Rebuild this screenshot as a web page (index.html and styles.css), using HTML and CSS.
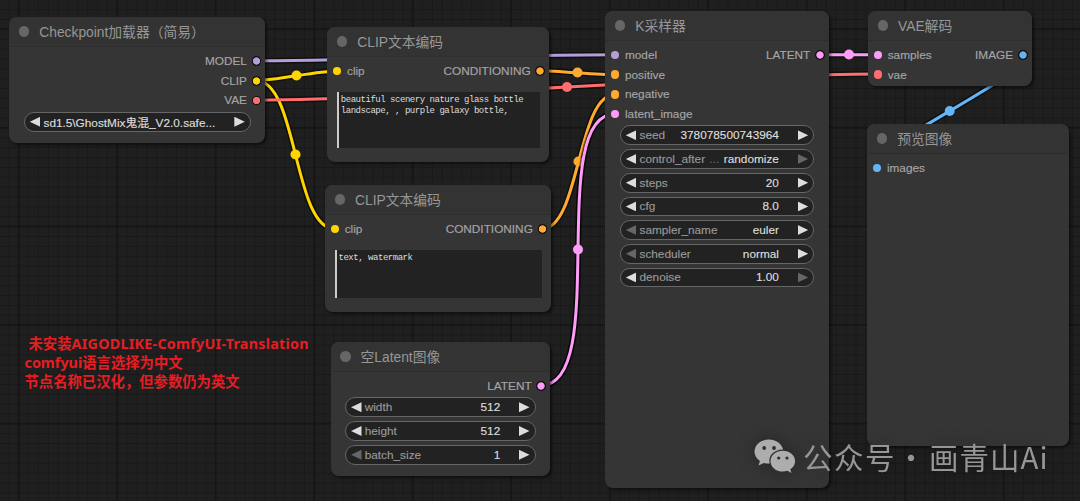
FILE: index.html
```html
<!DOCTYPE html>
<html lang="zh-CN">
<head>
<meta charset="utf-8">
<title>ComfyUI</title>
<link rel="stylesheet" href="styles.css">
</head>
<body>
<main class="canvas">
  <svg class="links" width="1080" height="501" viewBox="0 0 1080 501">
    <defs>
      <pattern id="minor" x="18.3" y="28.9" width="9.85" height="9.86" patternUnits="userSpaceOnUse">
        <path d="M0 .5H9.85M.5 0V9.86" stroke="#191919" stroke-width="1"/>
      </pattern>
      <pattern id="major" x="17.8" y="28.3" width="98.5" height="98.6" patternUnits="userSpaceOnUse">
        <path d="M0 .9H98.5M.9 0V98.6" stroke="#151515" stroke-width="1.6"/>
      </pattern>
    </defs>
    <rect width="1080" height="501" fill="url(#minor)"/>
    <rect width="1080" height="501" fill="url(#major)"/>
    <g class="outline">
      <path d="M256 60.7C346 60.7 525 54.7 615 54.7"/>
      <path d="M256 80.5C276 80.5 317 71 337 71"/>
      <path d="M256 80.5C298 80.5 293 229 335 229"/>
      <path d="M256 100.2C411 100.2 723 74 878 74"/>
      <path d="M540 70.7C559 70.7 596 75 615 75"/>
      <path d="M542 229C580 229 577 94.5 615 94.5"/>
      <path d="M541 385.5C611 385.5 545 114 615 114"/>
      <path d="M820 54.7H878"/>
      <path d="M1022 54.5C1068 54.5 831 167.7 877 167.7"/>
    </g>
    <g class="wire model"><path d="M256 60.7C346 60.7 525 54.7 615 54.7"/></g>
    <g class="wire clip">
      <path d="M256 80.5C276 80.5 317 71 337 71"/><circle cx="296.5" cy="75.5" r="5"/>
      <path d="M256 80.5C298 80.5 293 229 335 229"/><circle cx="295.5" cy="154.5" r="5"/>
    </g>
    <g class="wire vae"><path d="M256 100.2C411 100.2 723 74 878 74"/><circle cx="567" cy="87" r="5"/></g>
    <g class="wire cond">
      <path d="M540 70.7C559 70.7 596 75 615 75"/><circle cx="577.5" cy="72.5" r="5"/>
      <path d="M542 229C580 229 577 94.5 615 94.5"/><circle cx="578.5" cy="161.5" r="5"/>
    </g>
    <path class="outline" d="M541 385.5C611 385.5 545 114 615 114"/>
    <g class="wire latent">
      <path d="M541 385.5C611 385.5 545 114 615 114"/><circle cx="578" cy="249.5" r="5"/>
      <path d="M820 54.7H878"/><circle cx="849" cy="54.5" r="5"/>
    </g>
    <g class="wire image"><path d="M1022 54.5C1068 54.5 831 167.7 877 167.7"/><circle cx="949.7" cy="111" r="5"/></g>
  </svg>

  <section class="node node-checkpoint">
    <h2 class="title">Checkpoint加载器（简易）</h2>
    <div class="slot"><span class="out model">MODEL</span></div>
    <div class="slot"><span class="out clip">CLIP</span></div>
    <div class="slot"><span class="out vae">VAE</span></div>
    <div class="widgets">
      <div class="widget"><i class="prev"></i><b class="file">sd1.5\GhostMix鬼混_V2.0.safe...</b><i class="next"></i></div>
    </div>
  </section>

  <section class="node node-positive">
    <h2 class="title">CLIP文本编码</h2>
    <div class="slot"><span class="in clip">clip</span><span class="out cond">CONDITIONING</span></div>
    <div class="prompt">beautiful scenery nature glass bottle<br>landscape, , purple galaxy bottle,</div>
  </section>

  <section class="node node-negative">
    <h2 class="title">CLIP文本编码</h2>
    <div class="slot"><span class="in clip">clip</span><span class="out cond">CONDITIONING</span></div>
    <div class="prompt">text, watermark</div>
  </section>

  <section class="node node-latent">
    <h2 class="title">空Latent图像</h2>
    <div class="slot"><span class="out latent">LATENT</span></div>
    <div class="widgets">
      <div class="widget"><i class="prev"></i><span>width</span><b>512</b><i class="next"></i></div>
      <div class="widget"><i class="prev"></i><span>height</span><b>512</b><i class="next"></i></div>
      <div class="widget"><i class="prev off"></i><span>batch_size</span><b>1</b><i class="next"></i></div>
    </div>
  </section>

  <section class="node node-sampler">
    <h2 class="title">K采样器</h2>
    <div class="slot"><span class="in model">model</span><span class="out latent">LATENT</span></div>
    <div class="slot"><span class="in cond">positive</span></div>
    <div class="slot"><span class="in cond">negative</span></div>
    <div class="slot"><span class="in latent">latent_image</span></div>
    <div class="widgets">
      <div class="widget"><i class="prev"></i><span>seed</span><b>378078500743964</b><i class="next"></i></div>
      <div class="widget"><i class="prev"></i><span>control_after <em>...</em></span><b>randomize</b><i class="next off"></i></div>
      <div class="widget"><i class="prev"></i><span>steps</span><b>20</b><i class="next"></i></div>
      <div class="widget"><i class="prev"></i><span>cfg</span><b>8.0</b><i class="next"></i></div>
      <div class="widget"><i class="prev off"></i><span>sampler_name</span><b>euler</b><i class="next"></i></div>
      <div class="widget"><i class="prev off"></i><span>scheduler</span><b>normal</b><i class="next"></i></div>
      <div class="widget"><i class="prev"></i><span>denoise</span><b>1.00</b><i class="next off"></i></div>
    </div>
  </section>

  <section class="node node-decode">
    <h2 class="title">VAE解码</h2>
    <div class="slot"><span class="in latent">samples</span><span class="out image">IMAGE</span></div>
    <div class="slot"><span class="in vae">vae</span></div>
  </section>

  <section class="node node-preview">
    <h2 class="title">预览图像</h2>
    <div class="slot"><span class="in image">images</span></div>
  </section>

  <div class="note">
    <p class="note-name">未安装<span>AIGODLIKE-ComfyUI-Translation</span></p>
    <p class="note-lang">comfyui语言选择为中文</p>
    <p>节点名称已汉化，但参数仍为英文</p>
  </div>

  <div class="watermark">
    <svg width="42" height="34" viewBox="0 0 42 34">
      <path fill="#adadad" d="M15 .5C6.900.5.500 5.800.500 12.600c0 3.900 2 7.200 5.400 9.500L4.600 26.600l5.100-2.700c1.900.6 3.900.8 6.100.7C13.600 17 20 10.500 29.200 10.600 27.500 4.700 22 .5 15 .5Z"/>
      <path fill="#adadad" d="M28.800 11.800c-6.900 0-12.300 4.600-12.300 10.400s5.400 10.400 12.300 10.400c1.700 0 3.300-.3 4.700-.8l3.900 2.100-1.100-3.700c3-1.900 4.800-4.800 4.800-8 0-5.800-5.400-10.400-12.300-10.400Z"/>
      <g fill="#303030"><circle cx="10.200" cy="9" r="1.900"/><circle cx="20" cy="9" r="1.900"/><circle cx="24.700" cy="19" r="1.600"/><circle cx="33" cy="19" r="1.600"/></g>
    </svg>
    <span class="wm-source">公众号</span><span class="wm-dot">·</span><span class="wm-name">画青山Ai</span>
  </div>
</main>
</body>
</html>
```

FILE: styles.css
```css
* { box-sizing: border-box; }
body { margin: 0; background: #1e1e1e; }
.canvas {
  position: relative;
  width: 1080px;
  height: 501px;
  overflow: hidden;
  background: #1f1f1f;
  font: 11.8px "Liberation Sans", "Noto Sans CJK SC", sans-serif;
}
.links { position: absolute; left: 0; top: 0; }
.outline { fill: none; stroke: rgba(0, 0, 0, .5); stroke-width: 6; }
.wire path { fill: none; stroke: var(--c); stroke-width: 3; }
.wire circle { fill: var(--c); }

.model { --c: #b39ddb; }
.clip { --c: #ffd500; }
.vae { --c: #ff6e6e; }
.cond { --c: #ffa931; }
.latent { --c: #ff9cf9; }
.image { --c: #64b5f6; }

.node {
  position: absolute;
  display: flex;
  flex-direction: column;
  border-radius: 8px;
  background: #353535;
  box-shadow: 2px 2px 3px rgba(0, 0, 0, .5);
}
.node-checkpoint { left: 9.300px; top: 17.200px; width: 256px; height: 126.300px; }
.node-positive { left: 327.300px; top: 27px; width: 221.700px; height: 134.700px; }
.node-negative { left: 325px; top: 185.200px; width: 226.200px; height: 127px; }
.node-latent { left: 330.500px; top: 342.200px; width: 219.500px; height: 133.500px; }
.node-sampler { left: 605.300px; top: 11.200px; width: 223.400px; height: 477.300px; }
.node-decode { left: 868px; top: 11px; width: 163.500px; height: 74.500px; }
.node-preview { left: 867.200px; top: 124.200px; width: 201.500px; height: 322px; }

.title {
  display: flex;
  align-items: center;
  flex: none;
  height: 30px;
  margin: 0 0 4px;
  padding: 0 0 1px 9.500px;
  gap: 10px;
  border-bottom: 1px solid #2e2e2e;
  border-radius: 8px 8px 0 0;
  background: #333;
  color: #979797;
  font-size: 13.800px;
  font-weight: 400;
  white-space: nowrap;
}
.title::before { content: ""; width: 10.500px; height: 10.500px; margin-top: 1px; border-radius: 50%; background: #666; }

.slot {
  display: flex;
  flex: none;
  align-items: center;
  justify-content: space-between;
  height: 19.700px;
  padding: 0 4px 0 5.700px;
  color: #a6a6a6;
  -webkit-text-stroke: .15px;
}
.slot span { display: flex; align-items: center; }
.out { margin-left: auto; gap: 4.700px; }
.in { gap: 5.500px; }
.in::before { content: ""; width: 8.500px; height: 8.500px; border-radius: 50%; background: var(--c); }
.out::after {
  content: "";
  width: 9.700px;
  height: 9.700px;
  border-radius: 50%;
  background: radial-gradient(circle, var(--c) 3.300px, #111 4px);
}

.widgets { display: flex; flex-direction: column; gap: 3.900px; padding: 1.500px 14.500px 0; }
.widget {
  display: flex;
  align-items: center;
  height: 19.800px;
  padding: 0 5px 0 5px;
  border: 1px solid #666;
  border-radius: 10px;
  background: #222;
  color: #999;
  white-space: nowrap;
  -webkit-text-stroke: .15px;
}
.widget b { margin-left: auto; margin-right: 18.800px; color: #ddd; font-weight: 400; }
.widget .file { margin: 0 auto 0 0; }
.widget em { margin-left: 1px; color: #666; font-style: normal; }
.prev, .next { flex: none; width: 10.500px; height: 10px; background: #ddd; }
.prev { margin-right: 3.200px; clip-path: polygon(0 50%, 100% 0, 100% 100%); }
.next { clip-path: polygon(0 0, 100% 50%, 0 100%); }
.off { background: #666; }

.prompt {
  flex: 1;
  margin: 11.500px 9px 14px 9.500px;
  padding: 3px 0 0 2px;
  border-left: 2px solid #ccc;
  background: #222;
  color: #ddd;
  font: 9px/11px "Liberation Mono", monospace;
  letter-spacing: -.470px;
  white-space: nowrap;
}

.note {
  position: absolute;
  left: 24.500px;
  top: 333.500px;
  color: #e61e23;
  font: bold 14.350px/19px "Noto Sans", "Noto Sans CJK SC", sans-serif;
  white-space: nowrap;
}
.note p { margin: 0; }
.note .note-name { padding-left: 4px; }
.note-name span { letter-spacing: .240px; }

.watermark {
  position: absolute;
  left: 753.500px;
  top: 434px;
  display: flex;
  align-items: center;
  height: 44px;
  color: #969696;
  font: 29.500px "Noto Sans CJK SC", sans-serif;
  white-space: nowrap;
  filter: drop-shadow(0 0 9px rgba(0, 0, 0, .35));
}
.wm-source { margin-left: 7.500px; letter-spacing: 1.500px; }
.wm-dot { width: 30px; margin: 0 3px 0 0; text-align: center; }
.wm-name { letter-spacing: 1px; }
```
